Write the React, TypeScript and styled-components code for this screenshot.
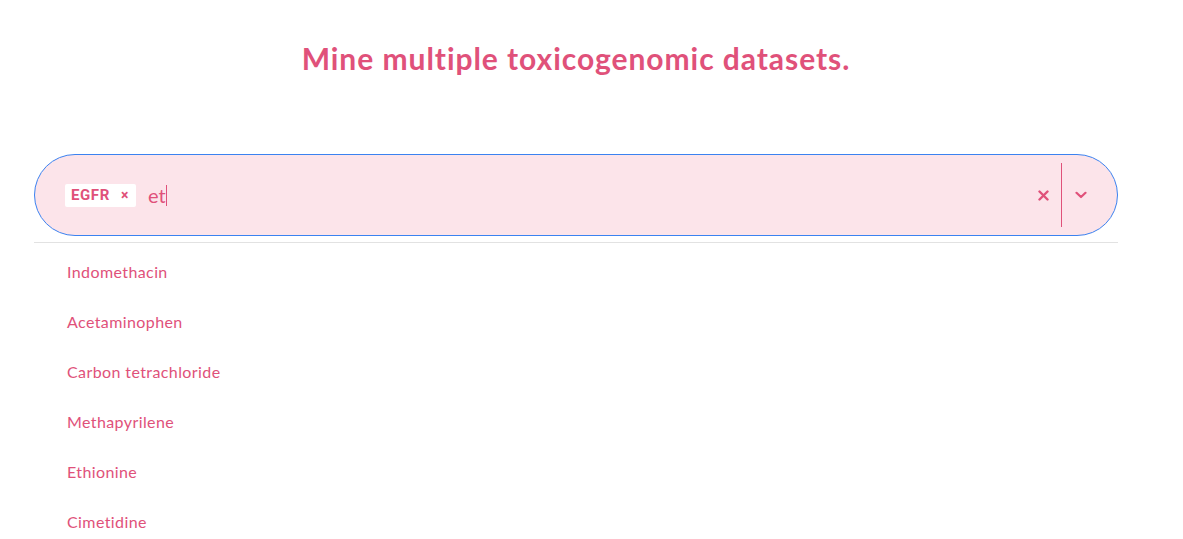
import React from "react";
import styled, { createGlobalStyle } from "styled-components";

const Global = createGlobalStyle`
  html, body { margin: 0; padding: 0; background: #ffffff; }
  body { font-family: "Lato", "Open Sans", sans-serif; }
`;

const PINK = "#e0517a";

const Page = styled.div`
  width: 1084px;
  margin-left: 34px;
  display: flex;
  flex-direction: column;
`;

const Title = styled.h1`
  margin: 0;
  padding-top: 40px;
  height: 154px;
  box-sizing: border-box;
  text-align: center;
  font-size: 30px;
  font-weight: 700;
  color: ${PINK};
  letter-spacing: 0.95px;
`;

const SelectBox = styled.div`
  height: 82px;
  box-sizing: border-box;
  border: 1px solid #3b82f0;
  border-radius: 41px;
  background: #fce4ea;
  display: flex;
  align-items: center;
  padding-left: 30px;
  padding-right: 26px;
`;

const ValueArea = styled.div`
  flex: 1;
  display: flex;
  align-items: center;
  gap: 12px;
`;

const Chip = styled.div`
  display: flex;
  align-items: center;
  gap: 11px;
  height: 23px;
  padding: 0 7px 0 6px;
  background: #ffffff;
  border-radius: 2px;
  color: ${PINK};
  font-family: "Roboto", sans-serif;
  font-weight: 700;
  font-size: 15px;
  letter-spacing: 0.6px;
`;

const ChipRemove = styled.span`
  font-size: 14px;
  font-weight: 700;
  line-height: 1;
`;

const Typed = styled.span`
  font-size: 20px;
  color: ${PINK};
  display: flex;
  align-items: center;
`;

const Caret = styled.span`
  display: inline-block;
  width: 1px;
  height: 21px;
  background: ${PINK};
`;

const Indicators = styled.div`
  display: flex;
  align-items: center;
  height: 100%;
`;

const IconBtn = styled.div`
  width: 20px;
  display: flex;
  align-items: center;
  justify-content: center;
  color: ${PINK};
`;

const Divider = styled.div`
  width: 1px;
  height: 64px;
  background: ${PINK};
  margin: 0 9px 0 8px;
`;

const Menu = styled.ul`
  list-style: none;
  margin: 6px 0 0 0;
  padding: 3px 0 0 0;
  border-top: 1px solid #e2e2e2;
`;

const Option = styled.li`
  height: 50px;
  display: flex;
  align-items: center;
  padding-left: 33px;
  font-size: 16px;
  letter-spacing: 0.4px;
  color: ${PINK};
`;

const options = [
  "Indomethacin",
  "Acetaminophen",
  "Carbon tetrachloride",
  "Methapyrilene",
  "Ethionine",
  "Cimetidine",
];

export default function App() {
  return (
    <>
      <Global />
      <Page>
        <Title>Mine multiple toxicogenomic datasets.</Title>
        <SelectBox>
          <ValueArea>
            <Chip>
              EGFR
              <ChipRemove>×</ChipRemove>
            </Chip>
            <Typed>
              et
              <Caret />
            </Typed>
          </ValueArea>
          <Indicators>
            <IconBtn>
              <svg width="11" height="11" viewBox="0 0 11 11">
                <path d="M1.5 1.5 L9.5 9.5 M9.5 1.5 L1.5 9.5" stroke={PINK} strokeWidth="2.4" strokeLinecap="round" />
              </svg>
            </IconBtn>
            <Divider />
            <IconBtn>
              <svg width="12" height="8" viewBox="0 0 12 8">
                <path d="M1.5 1.8 L6 6 L10.5 1.8" stroke={PINK} strokeWidth="2.2" fill="none" strokeLinecap="round" strokeLinejoin="round" />
              </svg>
            </IconBtn>
          </Indicators>
        </SelectBox>
        <Menu>
          {options.map((o) => (
            <Option key={o}>{o}</Option>
          ))}
        </Menu>
      </Page>
    </>
  );
}
